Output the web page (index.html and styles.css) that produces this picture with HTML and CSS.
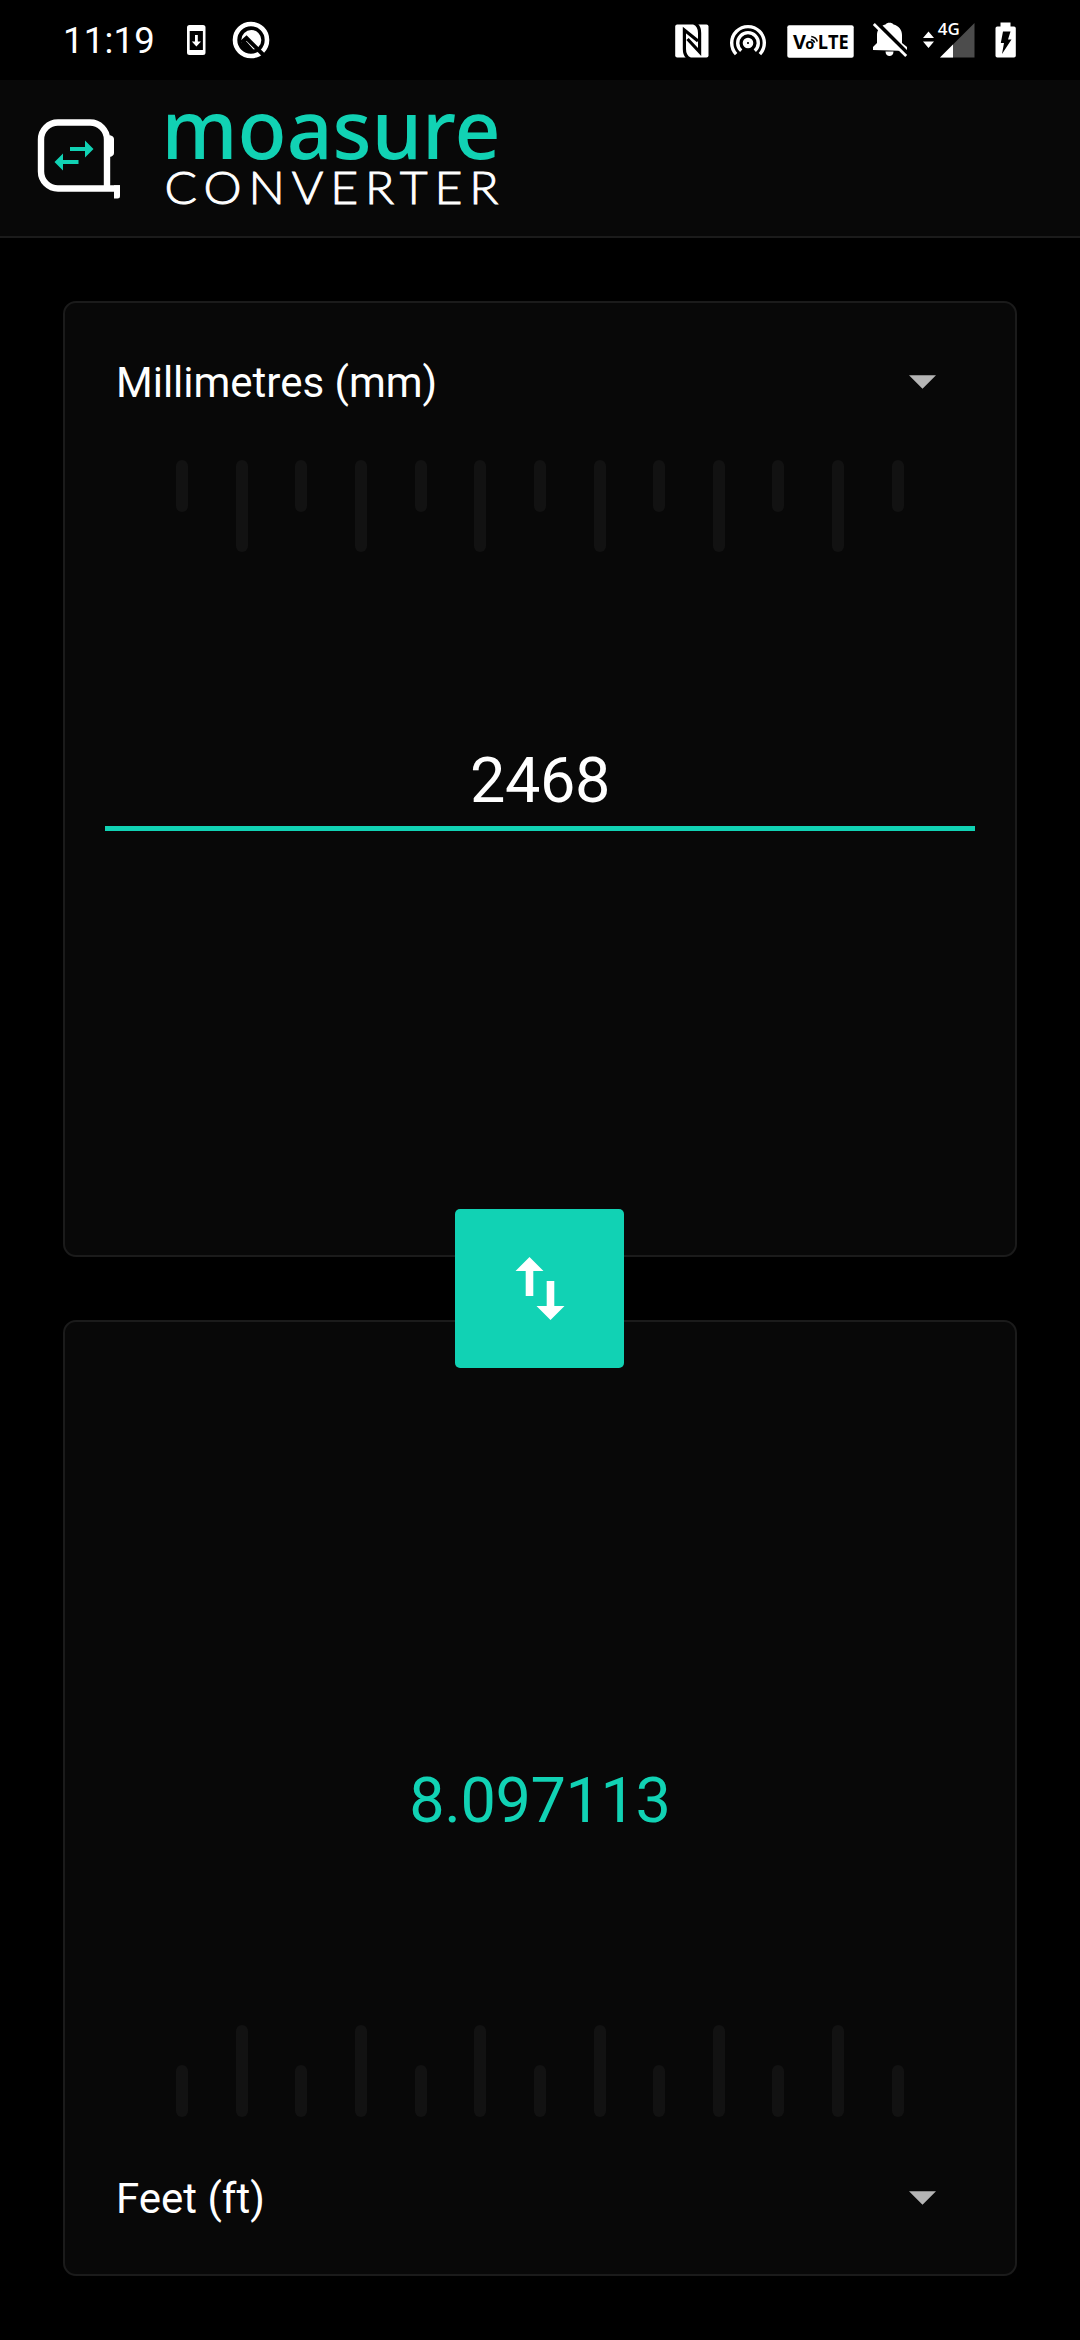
FILE: index.html
```html
<!DOCTYPE html>
<html lang="en">
<head>
<meta charset="utf-8">
<title>Moasure Converter</title>
<link rel="stylesheet" href="styles.css">
</head>
<body>
<div class="app">
  <div class="status">
    <span class="clock">11:19</span>
    <svg class="st-download" width="20" height="32" viewBox="186 24 20 32"><path fill="#fff" fill-rule="evenodd" d="M189.500 25h13.500a2.500 2.500 0 0 1 2.500 2.500v25a2.500 2.500 0 0 1-2.500 2.500h-13.500a2.500 2.500 0 0 1-2.500-2.500v-25a2.500 2.500 0 0 1 2.500-2.500zM189.700 31v19h13.200v-19zM195 35h2.800v6.500h3.200l-4.600 5-4.600-5h3.200z"/></svg>
    <svg class="st-q" width="38" height="38" viewBox="232 21 38 38"><circle cx="251" cy="40" r="16" fill="none" stroke="#fff" stroke-width="4.600"/><circle cx="251.300" cy="40" r="10" fill="#fff"/><path d="M241.500 42.500l5-4.500 19 19" fill="none" stroke="#000" stroke-width="4"/><path d="M241 43.500l4.500-3 8.500 9.500-8 1z" fill="#000"/></svg>
    <span class="grow"></span>
    <svg class="st-nfc" width="34" height="34" viewBox="674.500 23.500 34 34"><rect x="674.700" y="24" width="33.300" height="33" rx="2" fill="#fff"/><path d="M689.500 58.500c-4.500-2-5.600-5.500-5.600-10V29.500L697.500 40.500M693.500 22.500c4.500 2 5.600 5.500 5.600 10V51.500L687 38.500" fill="none" stroke="#000" stroke-width="3.200"/></svg>
    <svg class="st-hotspot" width="36" height="32" viewBox="729.500 24.500 36 32"><g fill="none" stroke="#fff" stroke-width="3.400"><circle cx="747.500" cy="42.500" r="3.200" stroke-width="4.200"/><path d="M740.700 50.200a10.300 10.300 0 1 1 13.600 0"/><path d="M735.600 53.600a16.300 16.300 0 1 1 23.800 0"/></g></svg>
    <svg class="st-volte" width="67" height="33" viewBox="786.700 25 67 33"><rect x="787" y="25.300" width="66.400" height="32.400" rx="2" fill="#fff"/><g fill="#000" font-family="Open Sans, sans-serif" font-weight="700"><text x="792.600" y="49" font-size="19.500" textLength="13" lengthAdjust="spacingAndGlyphs">V</text><text x="805" y="48.500" font-size="13.500" textLength="9" lengthAdjust="spacingAndGlyphs">o</text><text x="817.500" y="49" font-size="19.500" textLength="31" lengthAdjust="spacingAndGlyphs">LTE</text></g><path d="M810.500 39.500q3 .5 3.800 3.300M811 36.500q5 .8 6 5" fill="none" stroke="#000" stroke-width="1.500"/></svg>
    <svg class="st-bell" width="36" height="36" viewBox="872 22 36 36"><path fill="#fff" d="M873 50v-3l4-4v-8c0-5.500 3.300-9.400 8.500-10.600 1-2.200 7-2.200 8 0 5.200 1.200 8.500 5.100 8.500 10.600v8l5 4v4zM885.500 51.500h8c0 6-8 6-8 0z"/><path d="M876.500 22.500l34 34" stroke="#000" stroke-width="4"/><path d="M873.800 24l32.400 32" stroke="#fff" stroke-width="2.800"/></svg>
    <svg class="st-signal" width="54" height="36" viewBox="922 22 54 36"><path d="M923 38l5.500-6.500L934 38zM923 41.500l5.500 6.500 5.500-6.500z" fill="#fff"/><path d="M974.500 23v34.500H940z" fill="#4c4c4c"/><path d="M953 44.500v13h-13z" fill="#fff"/><text x="937.800" y="35" font-family="Open Sans, sans-serif" font-weight="600" font-size="16.800" fill="#fff" stroke="#000" stroke-width="3" paint-order="stroke" textLength="22" lengthAdjust="spacingAndGlyphs">4G</text></svg>
    <svg class="st-battery" width="21" height="36" viewBox="994.500 21.500 21 36"><path fill="#fff" d="M1000 22h10v4h3.500q1.800 0 1.800 1.800v27.400q0 1.800-1.800 1.800h-16.700q-1.800 0-1.800-1.800v-27.400q0-1.800 1.800-1.800h3.200z"/><path d="M1002.500 31h7.500l-2.500 8h3.500l-9.500 14.500 2-11h-3.200z" fill="#000"/></svg>
  </div>

  <header class="header">
    <svg class="logo" width="84" height="82" viewBox="37 118 84 82">
      <path d="M107 188V139.500a17 17 0 0 0-17-17H58a17 17 0 0 0-17 17v32a17 17 0 0 0 17 17h62" fill="none" stroke="#fff" stroke-width="6.400"/>
      <path d="M109.500 135q4.500 1 4.500 4v14q0 3-4.500 4zM114 185.200h6V196q0 2.500-2.500 2.500H114z" fill="#fff"/>
      <path d="M70 147h15v-6.500l8.500 8.500-8.500 8.500V151H70zM78.500 160v4H63v6.500l-8.500-8.500 8.500-8.500v6.500z" fill="#11d2b4"/>
    </svg>
    <svg class="wordmark" width="340" height="110" viewBox="160 100 340 110">
      <text class="brand" x="161.500" y="159" textLength="339" lengthAdjust="spacingAndGlyphs">moasure</text>
      <text class="sub" x="164.500" y="203.500" textLength="341" lengthAdjust="spacingAndGlyphs">CONVERTER</text>
    </svg>
  </header>

  <main class="main">
    <section class="card">
      <div class="unit"><span>Millimetres (mm)</span><i class="caret"></i></div>
      <div class="ruler"><i></i><i></i><i></i><i></i><i></i><i></i><i></i><i></i><i></i><i></i><i></i><i></i><i></i></div>
      <div class="value entry">2468</div>
    </section>
    <button class="swap" aria-label="Swap units">
      <svg width="50" height="64" viewBox="514.500 1257 50 64"><path fill="#fff" d="M529 1257l14 14h-10.200v25h-7.600v-25H515zM546.200 1281h7.600v25H564l-14 14-14-14h10.200z"/></svg>
    </button>
    <section class="card card-result">
      <div class="value result">8.097113</div>
      <div class="ruler ruler-up"><i></i><i></i><i></i><i></i><i></i><i></i><i></i><i></i><i></i><i></i><i></i><i></i><i></i></div>
      <div class="unit"><span>Feet (ft)</span><i class="caret"></i></div>
    </section>
  </main>
</div>
</body>
</html>
```
FILE: styles.css
```css
* { box-sizing: border-box; }

body {
  margin: 0;
  background: #000;
  color: #fff;
  font-family: Roboto, sans-serif;
}

.app {
  width: 1080px;
  height: 2340px;
  display: flex;
  flex-direction: column;
  overflow: hidden;
}

/* System status bar */
.status {
  height: 80px;
  display: flex;
  align-items: flex-start;
  padding: 0 64.5px 0 63px;
}
.status svg { display: block; flex: none; overflow: visible; }
.status .st-nfc { overflow: hidden; }
.clock { font-size: 36.5px; line-height: 42px; margin-top: 20px; width: 92px; letter-spacing: 0.2px; white-space: nowrap; }
.grow { flex: 1; }
.st-download { margin: 24px 0 0 31px; }
.st-q { margin: 21px 0 0 26px; }
.st-nfc { margin-top: 23.5px; }
.st-hotspot { margin: 24.5px 0 0 21px; }
.st-volte { margin: 25px 0 0 21.2px; }
.st-bell { margin: 22px 0 0 18.300px; }
.st-signal { margin: 22px 0 0 14px; }
.st-battery { margin: 21.5px 0 0 18.5px; }

/* App header */
.header {
  height: 158px;
  background: #080808;
  border-bottom: 2px solid #1b1b1b;
  display: flex;
  align-items: flex-start;
  padding-left: 37px;
}
.logo { margin-top: 38px; }
.wordmark { margin: 20px 0 0 39px; overflow: visible; }
.brand { font-family: "Noto Sans", sans-serif; font-weight: 500; font-size: 82px; fill: #11d2b4; }
.sub {
  font-family: Lato, sans-serif;
  font-weight: 300;
  font-size: 45px;
  letter-spacing: 6.5px;
  fill: #fff;
  stroke: #fff;
  stroke-width: 0.9px;
}

/* Converter cards */
.main {
  flex: 1;
  padding: 63px 63px 64px;
  display: flex;
  flex-direction: column;
  align-items: center;
}
.card {
  width: 954px;
  height: 956px;
  flex: none;
  background: #080808;
  border: 2px solid #1b1b1b;
  border-radius: 13px;
  display: flex;
  flex-direction: column;
  align-items: center;
}
.unit {
  width: 100%;
  height: 50px;
  margin-top: 54px;
  padding: 0 79px 0 51px;
  display: flex;
  align-items: center;
  justify-content: space-between;
  font-size: 42px;
  line-height: 50px;
}
.unit span { padding-top: 2px; }
.caret {
  width: 27px;
  height: 13.500px;
  background: #b5b5b5;
  clip-path: polygon(0 0, 100% 0, 50% 100%);
}
.ruler {
  width: 727.600px;
  height: 92px;
  margin-top: 53px;
  display: flex;
  justify-content: space-between;
  align-items: flex-start;
}
.ruler i { width: 12px; height: 52px; border-radius: 6px; background: #121212; }
.ruler i:nth-child(even) { height: 92px; }
.ruler-up { align-items: flex-end; }
.value { font-size: 63px; line-height: 74px; text-align: center; letter-spacing: -0.4px; }
.entry {
  width: 870px;
  height: 101px;
  margin-top: 178px;
  padding-top: 14px;
  border-bottom: 5px solid #11d2b4;
}

.result { margin-top: 442px; height: 74px; color: #11d2b4; }
.card-result .ruler { margin-top: 187px; }
.card-result .unit { margin-top: 56px; }

/* Swap button straddles the gap between the two cards */
.swap {
  width: 169px;
  height: 159px;
  margin: -48px 1px -48px 0;
  padding: 0;
  flex: none;
  z-index: 1;
  border: 0;
  border-radius: 5px;
  background: #11d2b4;
  display: flex;
  align-items: center;
  justify-content: center;
}
```
